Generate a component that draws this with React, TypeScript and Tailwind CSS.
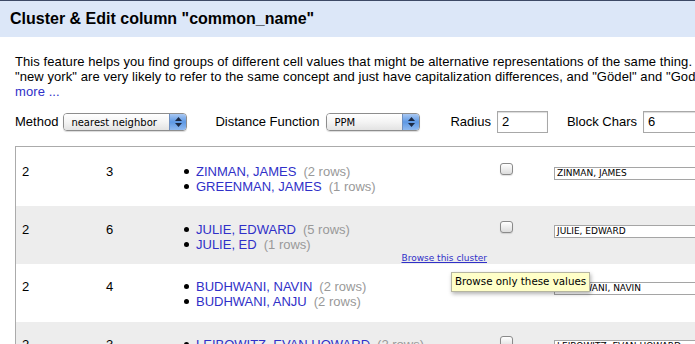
import React from "react";

const sans = { fontFamily: '"Liberation Sans", Arial, sans-serif' };
const deja = { fontFamily: '"DejaVu Sans", "Lucida Grande", sans-serif' };

function Select({ width, label }: { width: string; label: string }) {
  return (
    <div
      className={`${width} shrink-0 h-[18px] flex items-stretch rounded-[4px] border border-[#8d8d8d] overflow-hidden shadow-[0_1px_1px_rgba(0,0,0,0.15)]`}
    >
      <div
        className="flex-1 flex items-center pl-[7px] text-[10px] text-black bg-gradient-to-b from-white via-[#f4f4f4] to-[#e3e3e3]"
        style={deja}
      >
        {label}
      </div>
      <div className="w-[17px] flex flex-col items-center justify-center gap-[2px] bg-gradient-to-b from-[#a9c8f2] via-[#5d98e4] to-[#8fb9ef] border-l border-[#6f8fbf]">
        <svg width="7" height="4" viewBox="0 0 7 4">
          <path d="M3.5 0 L7 4 L0 4 Z" fill="#1b2a44" />
        </svg>
        <svg width="7" height="4" viewBox="0 0 7 4">
          <path d="M0 0 L7 0 L3.5 4 Z" fill="#1b2a44" />
        </svg>
      </div>
    </div>
  );
}

function Checkbox() {
  return (
    <div className="w-[13px] h-[12px] rounded-[3px] border border-[#8a8a8a] bg-gradient-to-b from-white to-[#dcdcdc] shadow-[0_1px_1px_rgba(0,0,0,0.12)]" />
  );
}

type Item = { name: string; count: number };

function Row({
  a,
  b,
  items,
  value,
  bg,
  h,
  pt,
  link,
}: {
  a: string;
  b: string;
  items: Item[];
  value: string;
  bg: string;
  h: string;
  pt: string;
  link?: boolean;
}) {
  return (
    <div
      className={`${bg} ${h} ${pt} pl-[6px] grid grid-cols-[84px_78px_316px_54px_200px] text-[13px] leading-[15px] text-black`}
      style={sans}
    >
      <div>{a}</div>
      <div>{b}</div>
      <div className="flex flex-col">
        {items.map((it) => (
          <div key={it.name} className="flex items-center whitespace-nowrap">
            <span className="w-[5px] h-[5px] rounded-full bg-black mr-[7px]" />
            <span className="text-[#3030c8]">{it.name}</span>
            <span className="text-[#999999] ml-[7px]">({it.count} rows)</span>
          </div>
        ))}
        {link && (
          <div
            className="self-end mr-[13px] mt-[1px] text-[9px] leading-[10px] text-[#3030c8] underline"
            style={deja}
          >
            Browse this cluster
          </div>
        )}
      </div>
      <div className="-mt-[1px]">
        <Checkbox />
      </div>
      <div className="mt-[3px]">
        <div
          className="h-[13px] w-[200px] border border-[#a5a5a5] bg-white pl-[2px] flex items-center text-[9px] text-black whitespace-nowrap overflow-hidden"
          style={deja}
        >
          {value}
        </div>
      </div>
    </div>
  );
}

export default function App() {
  return (
    <div className="relative w-[695px] h-[344px] overflow-hidden bg-white" style={sans}>
      <div className="border-t border-[#3d4966]" />
      <div className="h-[36px] bg-[#dce7f8] flex items-center pl-[10px]">
        <h1 className="text-[16px] font-bold text-black leading-[20px] whitespace-nowrap">
          Cluster &amp; Edit column "common_name"
        </h1>
      </div>

      <div className="pl-[15px] w-[760px]">
        <div className="mt-[17px] text-[13px] leading-[15px] text-black whitespace-nowrap tracking-[0.08px]">
          <div>
            This feature helps you find groups of different cell values that might be alternative representations of the same thing.{" "}
            <span className="text-[#e8a040]">For example, the two strings "New York" and</span>
          </div>
          <div>
            "new york" are very likely to refer to the same concept and just have capitalization differences, and "Gödel" and "Godel" probably refer to the same person.
          </div>
          <div className="text-[#3030c8]">more ...</div>
        </div>

        <div className="mt-[12px] h-[22px] flex items-center text-[13px] text-black whitespace-nowrap">
          <span>Method</span>
          <div className="ml-[5px] shrink-0">
            <Select width="w-[124px]" label="nearest neighbor" />
          </div>
          <span className="ml-[28px]">Distance Function</span>
          <div className="ml-[7px] shrink-0">
            <Select width="w-[94px]" label="PPM" />
          </div>
          <span className="ml-[30px]">Radius</span>
          <div className="ml-[6px] w-[51px] h-[22px] shrink-0 border border-[#a8a8a8] shadow-[inset_0_1px_1px_rgba(0,0,0,0.15)] flex items-center pl-[4px]">
            2
          </div>
          <span className="ml-[19px]">Block Chars</span>
          <div className="ml-[6px] w-[60px] h-[22px] shrink-0 border border-[#a8a8a8] shadow-[inset_0_1px_1px_rgba(0,0,0,0.15)] flex items-center pl-[4px]">
            6
          </div>
        </div>

        <div className="mt-[13px] w-[740px] border-l border-t border-[#ababab]">
          <Row
            a="2"
            b="3"
            items={[
              { name: "ZINMAN, JAMES", count: 2 },
              { name: "GREENMAN, JAMES", count: 1 },
            ]}
            value="ZINMAN, JAMES"
            bg="bg-white"
            h="h-[59px]"
            pt="pt-[17px]"
          />
          <Row
            a="2"
            b="6"
            items={[
              { name: "JULIE, EDWARD", count: 5 },
              { name: "JULIE, ED", count: 1 },
            ]}
            value="JULIE, EDWARD"
            bg="bg-[#ededed]"
            h="h-[58px]"
            pt="pt-[16px]"
            link
          />
          <Row
            a="2"
            b="4"
            items={[
              { name: "BUDHWANI, NAVIN", count: 2 },
              { name: "BUDHWANI, ANJU", count: 2 },
            ]}
            value="BUDHWANI, NAVIN"
            bg="bg-white"
            h="h-[58px]"
            pt="pt-[15px]"
          />
          <Row
            a="2"
            b="3"
            items={[
              { name: "LEIBOWITZ, EVAN HOWARD", count: 2 },
              { name: "LEIBOWITZ, EVAN", count: 1 },
            ]}
            value="LEIBOWITZ, EVAN HOWARD"
            bg="bg-[#ededed]"
            h="h-[58px]"
            pt="pt-[15px]"
          />
        </div>
      </div>

      <div
        className="absolute left-[451px] top-[272px] h-[20px] px-[3px] flex items-center bg-[#ffffc8] border border-[#b5b5a0] shadow-[1px_2px_4px_rgba(0,0,0,0.3)] text-[10.3px] text-black whitespace-nowrap"
        style={deja}
      >
        Browse only these values
      </div>
    </div>
  );
}
